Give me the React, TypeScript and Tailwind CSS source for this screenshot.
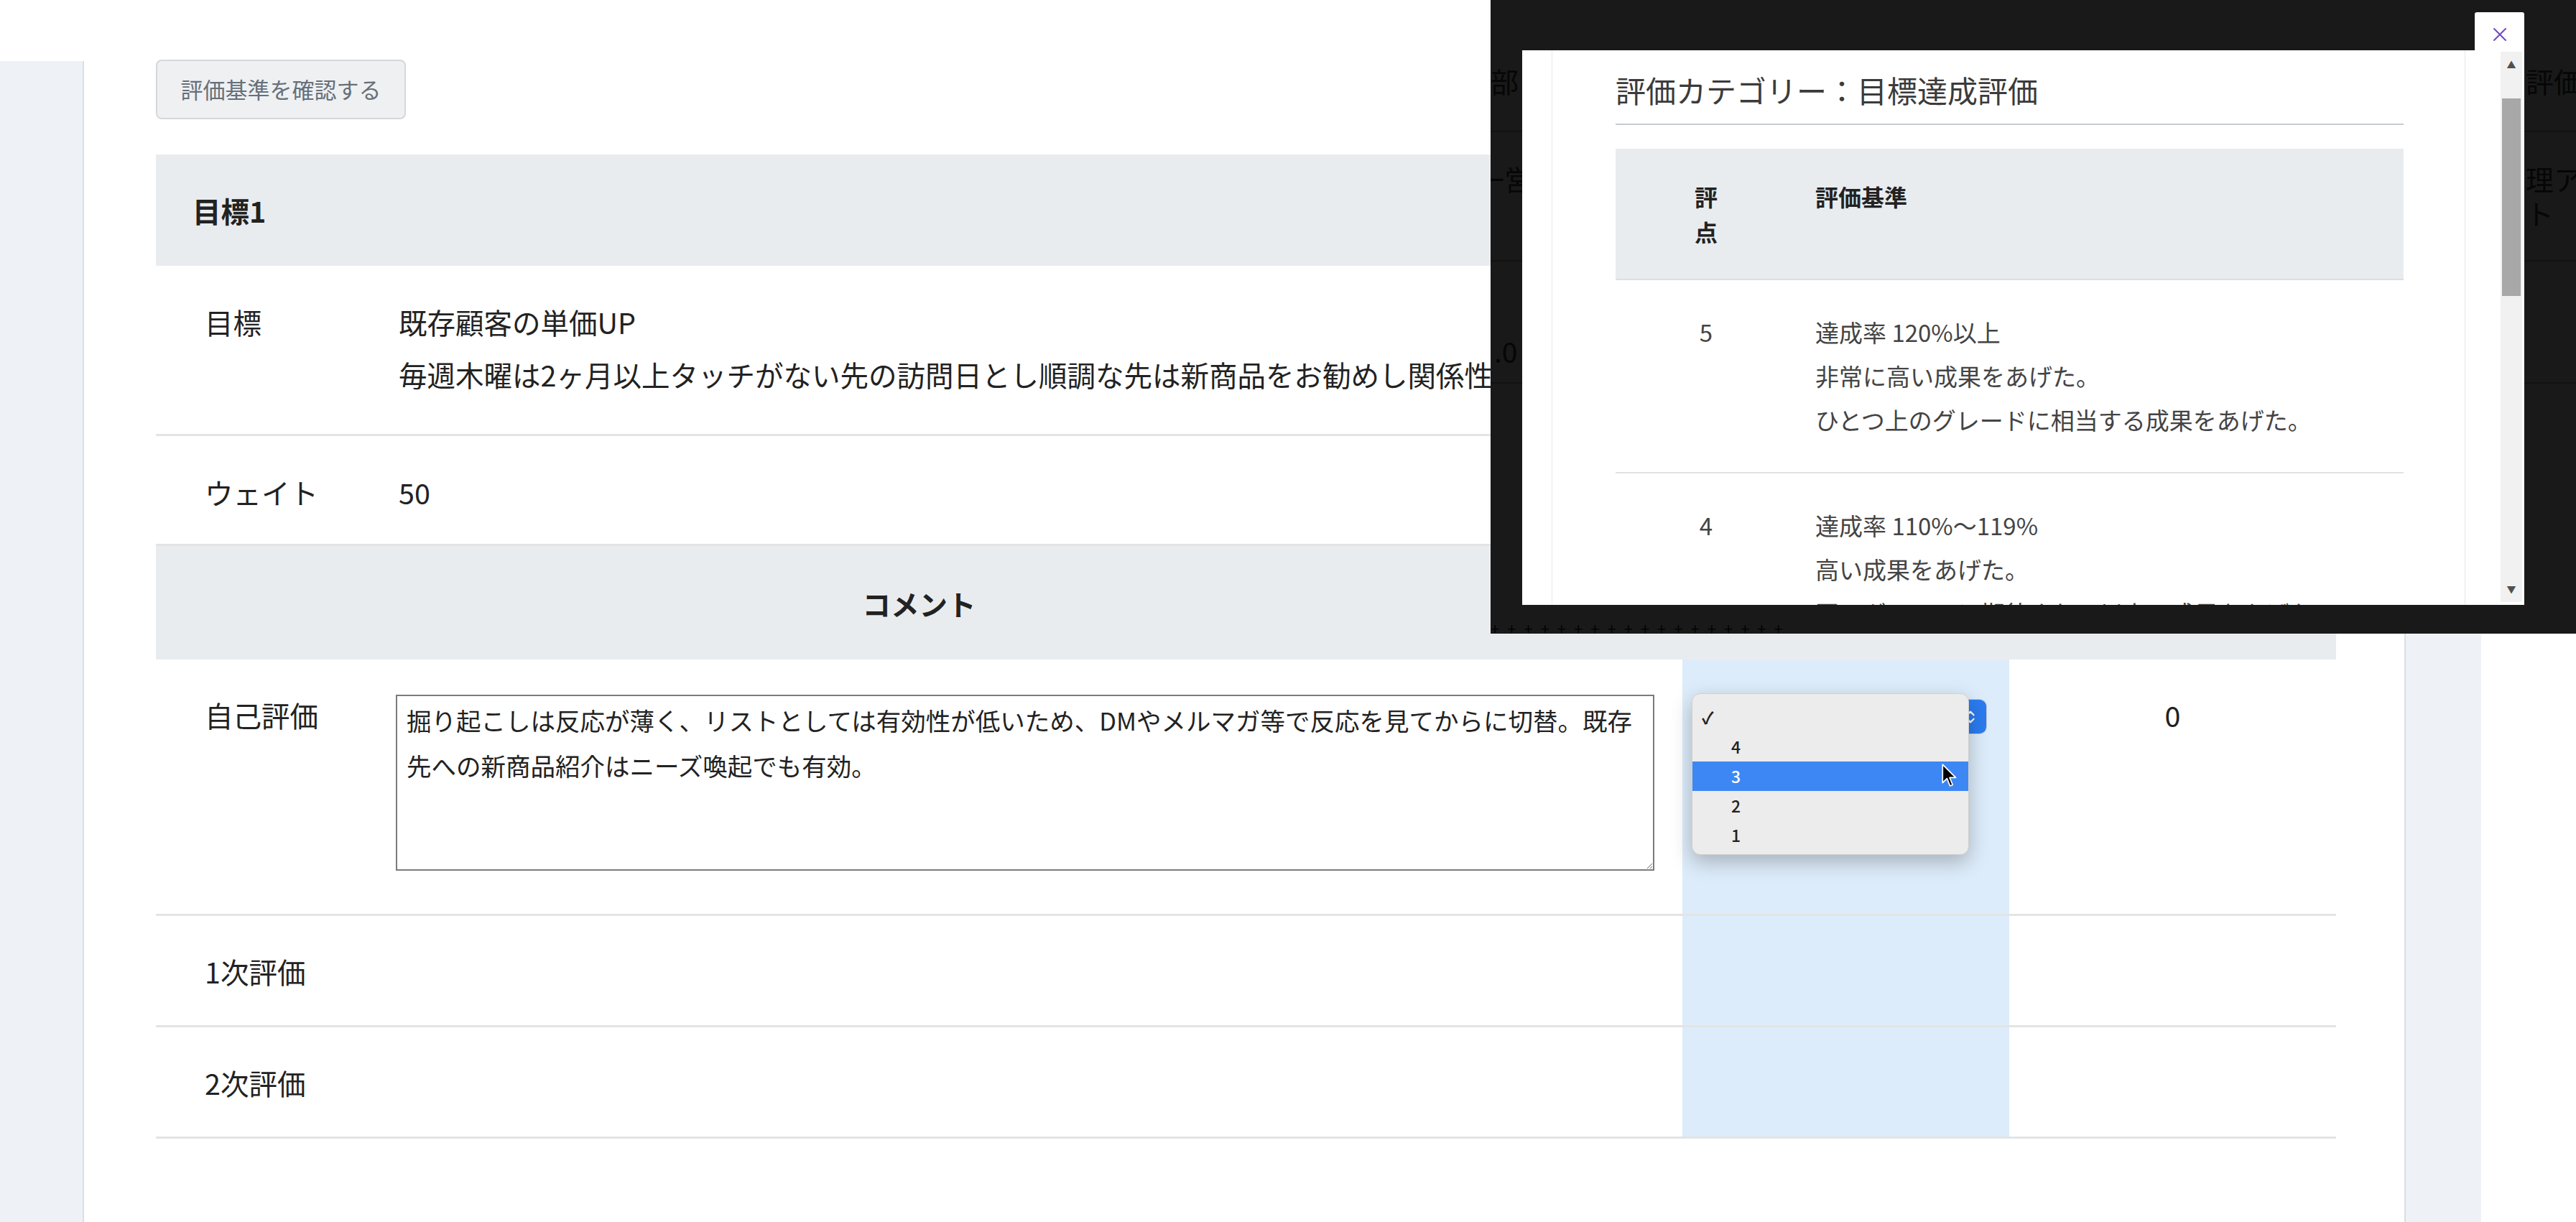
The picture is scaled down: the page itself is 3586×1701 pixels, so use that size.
import { ChevronsUpDown } from 'lucide-react';

const cols = 'grid grid-cols-[313px_1812px_455px_455px]';

const criteria = [
  {
    score: '5',
    lines: ['達成率 120%以上', '非常に高い成果をあげた。', 'ひとつ上のグレードに相当する成果をあげた。'],
  },
  {
    score: '4',
    lines: ['達成率 110%～119%', '高い成果をあげた。', '同一グレードに期待される以上の成果をあげた。'],
  },
];

const options = ['', '4', '3', '2', '1'];

const ScoreSelect = () => (
  <>
    {/* native select button, mostly hidden under the open popup */}
    <div className="ml-[17px] mt-[55px] w-[407px] h-[49px] flex rounded-[10px] border border-[#c9c9c9] bg-white overflow-hidden">
      <div className="flex-1" />
      <div className="w-[44px] bg-[#2b7cf0] flex items-center justify-center">
        <ChevronsUpDown className="w-[22px] h-[22px] text-white" strokeWidth={2.5} />
      </div>
    </div>

    {/* open popup menu */}
    <div className="absolute left-[13px] top-[47px] w-[386px] h-[225px] rounded-[12px] bg-[#ececec] border border-[#d0d0d0] shadow-[0_10px_28px_rgba(0,0,0,0.25)] pt-[12px] overflow-hidden">
      {options.map((opt, i) => {
        const active = opt === '3';
        return (
          <div
            key={i}
            className={`h-[41px] flex items-center text-[23px] font-medium ${
              active ? 'bg-[#3d87f5] text-white' : 'text-[#222]'
            }`}
          >
            <span className="w-[54px] pl-[13px] font-bold">{i === 0 ? '✓' : ''}</span>
            <span>{opt}</span>
          </div>
        );
      })}
    </div>

    {/* mouse pointer */}
    <svg className="absolute left-[361px] top-[145px]" width="22" height="34" viewBox="0 0 18 28">
      <path d="M1 1 L1 22 L6 17 L9.5 25.5 L12.5 24.3 L9 16 L16 16 Z" fill="#000" stroke="#fff" strokeWidth="1.4" strokeLinejoin="round" />
    </svg>
  </>
);

const CriteriaModal = () => (
  <div className="absolute left-[2075px] top-0 w-[1511px] h-[882px] bg-[#191919] overflow-hidden whitespace-nowrap">
    {/* page behind the popup window, barely visible */}
    <div className="absolute left-0 right-0 top-[182px] h-[2px] bg-[#121212]" />
    <div className="absolute left-0 right-0 top-[362px] h-[2px] bg-[#121212]" />
    <div className="absolute left-0 right-0 top-[532px] h-[2px] bg-[#121212]" />
    <span className="absolute left-0 top-[92px] text-[39px] leading-[40px] text-[#060606]">部</span>
    <span className="absolute left-[1441px] top-[92px] text-[39px] leading-[40px] text-[#060606]">評価</span>
    <span className="absolute left-[-20px] top-[228px] text-[39px] leading-[40px] text-[#060606]">一営</span>
    <span className="absolute left-[1441px] top-[228px] text-[39px] leading-[40px] text-[#060606]">理ア</span>
    <span className="absolute left-[1441px] top-[276px] text-[39px] leading-[40px] text-[#060606]">ト</span>
    <span className="absolute left-[5px] top-[468px] text-[39px] leading-[40px] text-[#060606]">.0</span>
    <span className="absolute left-0 top-[862px] text-[22px] leading-[24px] tracking-[11px] text-[#030303]">
      ++++++++++++++++++
    </span>

    {/* close tab */}
    <div className="absolute left-[1370px] top-[17px] w-[69px] h-[60px] bg-white rounded-t-[3px] flex justify-center pt-[21px]">
      <svg width="22" height="20" viewBox="0 0 22 20">
        <path d="M3 2 L19 18 M19 2 L3 18" stroke="#7048c2" strokeWidth="2" strokeLinecap="round" />
      </svg>
    </div>

    {/* popup window */}
    <div className="absolute left-[44px] top-[70px] w-[1395px] h-[772px] bg-white flex overflow-hidden whitespace-normal">
      <div className="w-[42px] border-r border-[#e8e8e8]" />
      <div className="w-[1271px] border-r border-[#e8e8e8] pl-[88px] pr-[85px] pt-[25px] text-[#444]">
        <div className="text-[42px] leading-[60px] text-[#3b3b3b] pb-[17px] border-b-2 border-[#c3cdd4]">
          評価カテゴリー：目標達成評価
        </div>

        <div className="mt-[33px]">
          <div className="grid grid-cols-[252px_1fr] h-[183px] bg-[#e9ecef] border-b-2 border-[#dadfe3] text-[32px] leading-[49px] font-bold text-[#222]">
            <div className="flex justify-center pt-[42px]">
              <span className="text-center">
                評<br />点
              </span>
            </div>
            <div className="pl-[26px] pt-[42px]">評価基準</div>
          </div>

          {criteria.map((c) => (
            <div
              key={c.score}
              className="grid grid-cols-[252px_1fr] py-[42px] border-b-2 border-[#e2e2e2] text-[33px] leading-[61px]"
            >
              <div className="text-center">{c.score}</div>
              <div className="pl-[26px]">
                {c.lines.map((l) => (
                  <div key={l}>{l}</div>
                ))}
              </div>
            </div>
          ))}
        </div>
      </div>

      {/* scrollbar */}
      <div className="flex-1 flex justify-end pr-[3px] pb-[4px] pt-[2px]">
        <div className="w-[30px] bg-[#f1f1f1] flex flex-col items-center">
          <div className="h-[36px] flex items-center text-[13px] text-[#505050]">▲</div>
          <div className="mt-[29px] w-[26px] h-[275px] bg-[#a8a8a8]" />
          <div className="flex-1" />
          <div className="h-[36px] flex items-center text-[13px] text-[#505050]">▼</div>
        </div>
      </div>
    </div>
  </div>
);

export default function App() {
  return (
    <div className="relative w-[3586px] h-[1701px] bg-white overflow-hidden font-['Noto_Sans_CJK_JP','Noto_Sans',sans-serif] text-[#222]">
      <div className="flex h-full">
        {/* left nav strip */}
        <div className="w-[117px] pt-[85px] flex">
          <div className="flex-1 bg-[#eef2f6] border-r-2 border-[#d9dfe5]" />
        </div>

        {/* main content */}
        <div className="w-[3230px] pl-[100px] pt-[83px]">
          <button className="w-[348px] h-[83px] rounded-[8px] border-2 border-[#d4d8dc] bg-[#eef0f2] text-[31px] text-[#66707a]">
            評価基準を確認する
          </button>

          <div className="mt-[49px] w-[3035px] text-[39.5px] leading-[73px]">
            <div className="h-[155px] bg-[#e9ecef] flex items-center pl-[51px] font-bold">目標1</div>

            <div className={`${cols} h-[237px] border-b-[3px] border-[#e4e4e4]`}>
              <div className="pl-[68px] pt-[41px]">目標</div>
              <div className="col-span-3 pl-[25px] pt-[41px] whitespace-nowrap overflow-hidden">
                <div>既存顧客の単価UP</div>
                <div>毎週木曜は2ヶ月以上タッチがない先の訪問日とし順調な先は新商品をお勧めし関係性を深める。</div>
              </div>
            </div>

            <div className={`${cols} h-[153px] border-b-[3px] border-[#e4e4e4]`}>
              <div className="pl-[68px] pt-[41px]">ウェイト</div>
              <div className="col-span-3 pl-[25px] pt-[41px]">50</div>
            </div>

            <div className={`${cols} h-[158px] bg-[#e9ecef]`}>
              <div className="col-span-2 flex items-center justify-center font-bold">コメント</div>
              <div />
              <div />
            </div>

            <div className={`${cols} h-[357px] border-b-[3px] border-[#e4e4e4]`}>
              <div className="pl-[68px] pt-[40px]">自己評価</div>
              <div className="pl-[21px] pt-[49px]">
                <textarea
                  readOnly
                  wrap="off"
                  className="block w-[1752px] h-[245px] border-2 border-[#7b7b7b] bg-white pl-[13px] pt-[2px] text-[34.5px] leading-[63px] text-[#222] overflow-hidden whitespace-pre"
                  defaultValue={
                    '掘り起こしは反応が薄く、リストとしては有効性が低いため、DMやメルマガ等で反応を見てからに切替。既存\n先への新商品紹介はニーズ喚起でも有効。'
                  }
                />
              </div>
              <div className="relative bg-[#ddecfa]">
                <ScoreSelect />
              </div>
              <div className="text-center pt-[40px]">0</div>
            </div>

            {['1次評価', '2次評価'].map((label) => (
              <div key={label} className={`${cols} h-[155px] border-b-[3px] border-[#e4e4e4]`}>
                <div className="pl-[68px] flex items-center">{label}</div>
                <div />
                <div className="bg-[#ddecfa]" />
                <div />
              </div>
            ))}
          </div>
        </div>

        {/* right side strip */}
        <div className="w-[107px] bg-[#eef2f6] border-l-2 border-[#d9dfe5]" />
        <div className="flex-1" />
      </div>

      <CriteriaModal />
    </div>
  );
}
